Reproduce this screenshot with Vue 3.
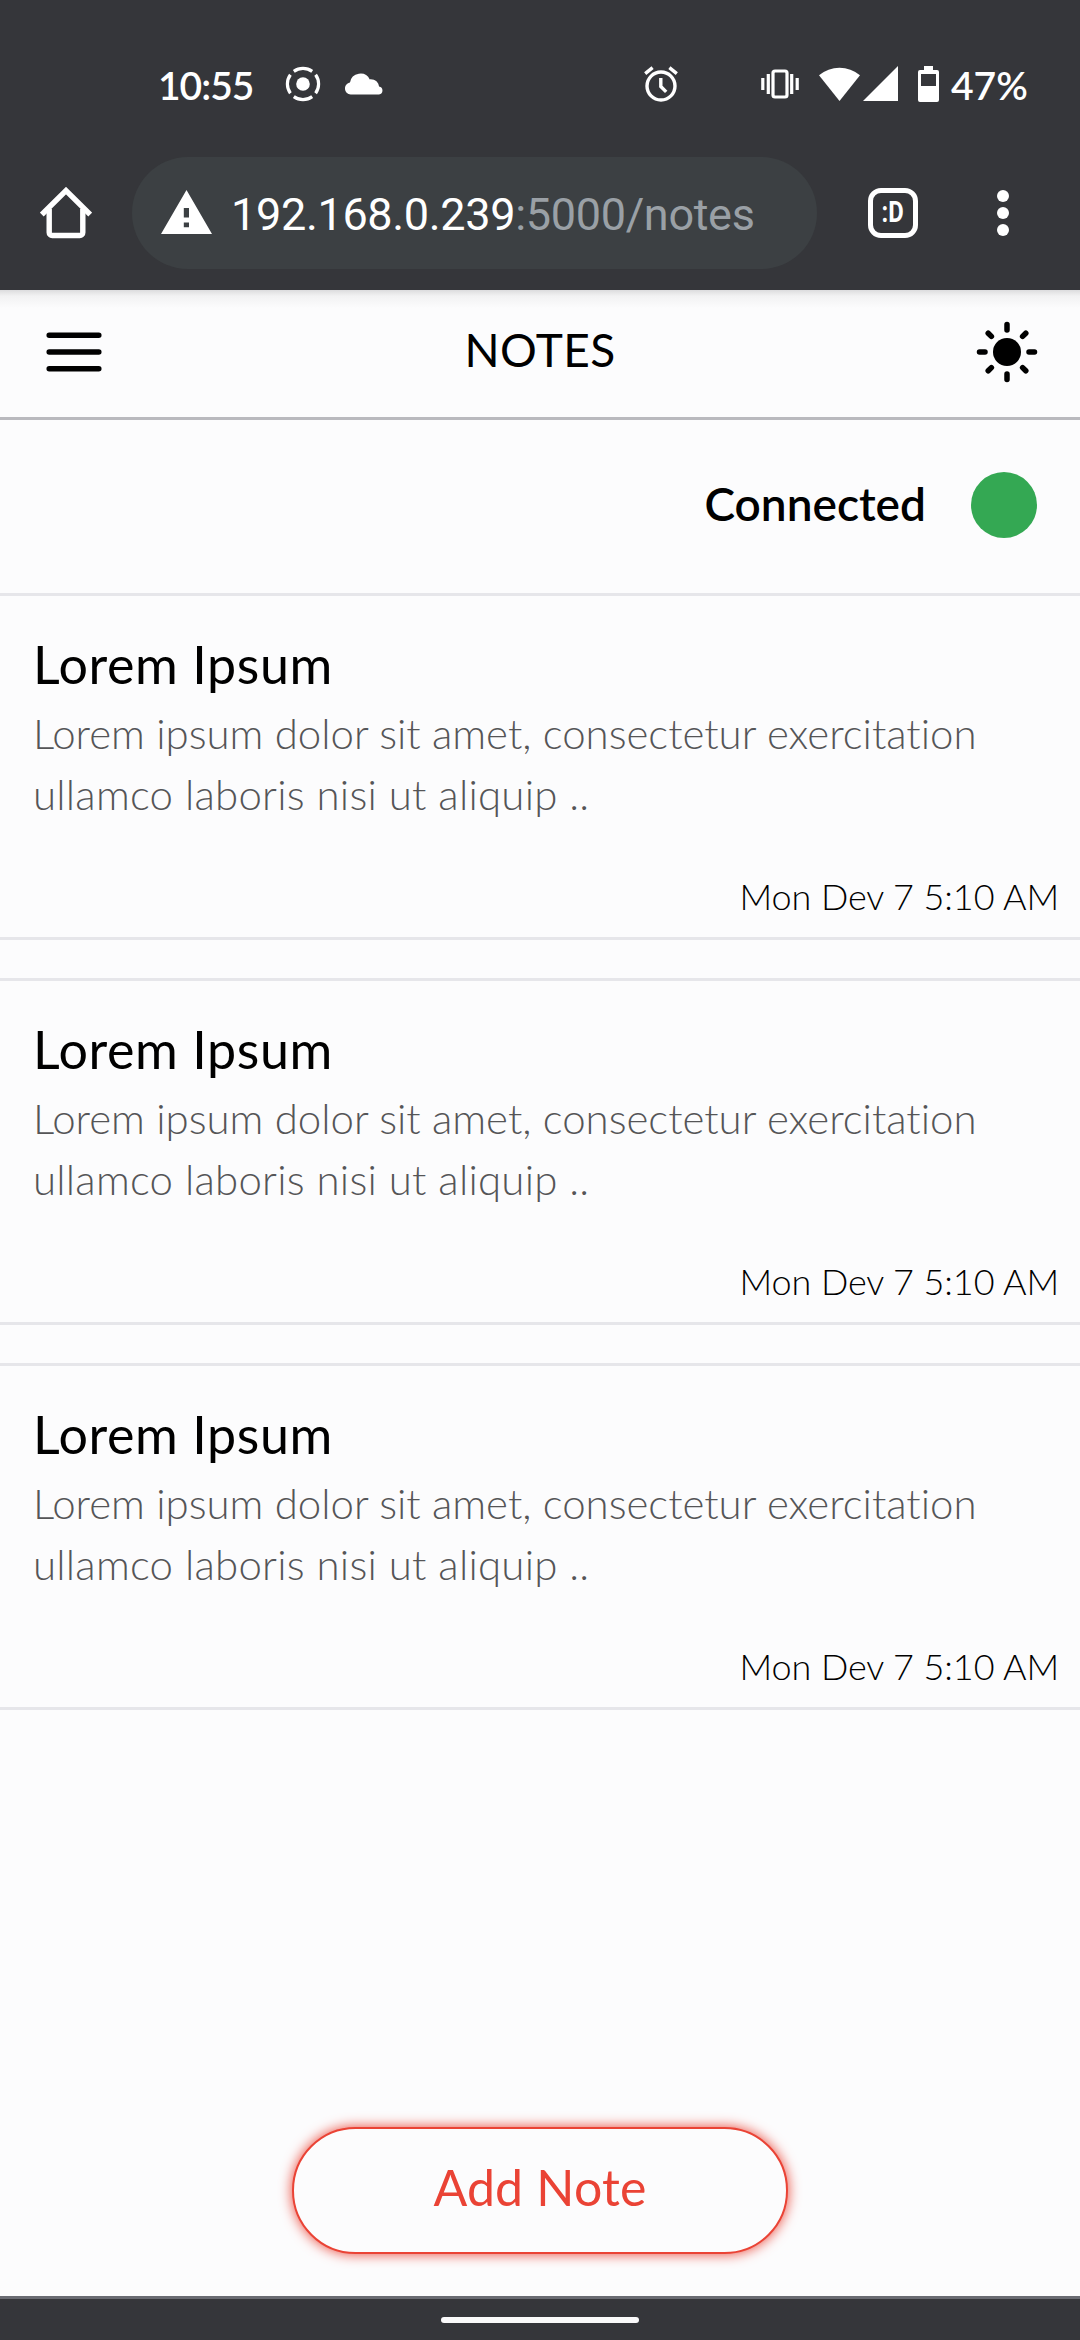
<script setup>
const notes = [1, 2, 3].map((id) => ({
  id,
  title: 'Lorem Ipsum',
  first: 'Lorem ipsum dolor sit amet, consectetur exercitation',
  second: 'ullamco laboris nisi ut aliquip ..',
  date: 'Mon Dev 7 5:10 AM',
}))
</script>

<template>
  <div class="screen">
    <header class="chrome">
      <div class="status">
        <span class="clock">10:55</span>
        <svg class="cast" width="36" height="36" viewBox="-18 -18 36 36" fill="none" stroke="#fff" stroke-width="3.2">
          <circle r="6.8" fill="#fff" stroke="none" />
          <path d="M-9.2-12.6A15.6 15.6 0 0 1 9.2-12.6M12.6-9.2A15.6 15.6 0 0 1 12.6 9.2M9.2 12.6A15.6 15.6 0 0 1-9.2 12.6M-12.6 9.2A15.6 15.6 0 0 1-12.6-9.2" />
        </svg>
        <svg class="cloud" width="38" height="22" viewBox="0 0 38 22" fill="#fff">
          <path d="M6 21.5A5.7 5.7 0 0 1 0 15.4C0 12 2.4 9.8 5 9.4A10.5 10.5 0 0 1 24.8 6.4C30 6 33.6 9.4 34 13.4A4.1 4.1 0 0 1 34 21.5Z" />
        </svg>
        <span class="grow"></span>
        <svg class="alarm" width="34" height="36" viewBox="0 0 34 36" fill="none" stroke="#fff" stroke-width="3.4">
          <circle cx="17" cy="20" r="14" />
          <path d="M16.8 12v8.5l5.4 5.4M1.2 7.6L8.6 1.6M32.8 7.6L25.4 1.6" />
        </svg>
        <svg class="vibrate" width="38" height="30" viewBox="0 0 38 30" fill="none" stroke="#fff" stroke-width="3.2">
          <rect x="12" y="2" width="14" height="26" rx="2" />
          <path d="M7.3 5v20M1.8 9v12M30.7 5v20M36.2 9v12" />
        </svg>
        <svg class="wifi" width="41" height="35" viewBox="0 0 41 35" fill="#fff"><path d="M20.5 35L0 9.2A32 32 0 0 1 41 9.2Z" /></svg>
        <svg class="signal" width="35" height="35" viewBox="0 0 35 35" fill="#fff"><path d="M35 0V35H0Z" /></svg>
        <svg class="battery" width="21" height="36" viewBox="0 0 21 36" fill="#fff" fill-rule="evenodd">
          <path d="M6 0h9v4h4a2 2 0 0 1 2 2v28a2 2 0 0 1-2 2H2a2 2 0 0 1-2-2V6a2 2 0 0 1 2-2h4zM3 8v12h15V8z" />
        </svg>
        <span class="percent">47%</span>
      </div>

      <div class="toolbar">
        <svg class="home" width="52" height="52" viewBox="0 0 52 52" fill="none" stroke="#fff" stroke-width="5.4" stroke-linejoin="round">
          <path d="M1.8 27.5L26 3.6L50.2 27.5" stroke-linejoin="miter" />
          <path d="M9.2 22V45.5a3 3 0 0 0 3 3H39.8a3 3 0 0 0 3-3V22" />
        </svg>
        <div class="omnibox">
          <svg width="51" height="44" viewBox="0 0 51 44" fill="#fff" fill-rule="evenodd">
            <path d="M25.5 0L51 44H0ZM22.8 18v9.5h5.2V18zM22.8 32.5v4.8h5.2v-4.8z" />
          </svg>
          <span class="url">192.168.0.239<span class="path">:5000/notes</span></span>
        </div>
        <div class="tabs"><span>:D</span></div>
        <svg class="more" width="12" height="46" viewBox="0 0 12 46" fill="#fff">
          <circle cx="6" cy="6" r="6" /><circle cx="6" cy="23" r="6" /><circle cx="6" cy="40" r="6" />
        </svg>
      </div>
    </header>

    <nav class="appbar">
      <svg width="56" height="40" viewBox="0 0 56 40" stroke="#000" stroke-width="5.5" stroke-linecap="round">
        <path d="M3.2 3.3H52.8M3.2 20H52.8M3.2 36.7H52.8" />
      </svg>
      <h1>NOTES</h1>
      <svg width="62" height="62" viewBox="-31 -31 62 62" stroke="#000" stroke-width="5.5" stroke-linecap="round">
        <circle r="14" stroke="none" />
        <path d="M0-27.5V-22M0 27.5V22M-27.5 0H-22M27.5 0H22M-18.8-18.8L-15.6-15.6M18.8-18.8L15.6-15.6M-18.8 18.8L-15.6 15.6M18.8 18.8L15.6 15.6" />
      </svg>
    </nav>

    <div class="connection">
      <span class="state">Connected</span>
      <i class="dot"></i>
    </div>

    <main class="notes">
      <article v-for="note in notes" :key="note.id" class="note">
        <h2>{{ note.title }}</h2>
        <p class="body"><span class="first">{{ note.first }}</span><br /><span class="second">{{ note.second }}</span></p>
        <time>{{ note.date }}</time>
      </article>
    </main>

    <div class="actions">
      <button class="add">Add Note</button>
    </div>

    <footer class="navbar"><i class="handle"></i></footer>
  </div>
</template>

<style>
body {
  margin: 0;
}
</style>

<style scoped>
* {
  box-sizing: border-box;
}

.screen {
  display: flex;
  flex-direction: column;
  width: 1080px;
  height: 2340px;
  background: #fcfcfd;
  color: #000;
  font-family: Lato, "Noto Sans", sans-serif;
  font-variant-ligatures: none;
}

svg {
  display: block;
  flex: none;
}

.chrome {
  flex: none;
  height: 290px;
  background: #35363a;
  color: #fff;
}

.status {
  display: flex;
  align-items: center;
  height: 167px;
  padding: 0 53px 0 158px;
}

.clock,
.percent {
  font-size: 39px;
  font-weight: 600;
  line-height: 40px;
  margin-top: 2px;
}

.clock {
  width: 97px;
  letter-spacing: -1px;
}

.cast {
  margin-left: 30px;
}

.cloud {
  margin-left: 24px;
}

.grow {
  flex: 1;
}

.vibrate {
  margin-left: 83px;
}

.wifi {
  margin-left: 20px;
}

.signal {
  margin-left: 3px;
}

.battery {
  margin-left: 20px;
}

.percent {
  width: 76px;
  margin-left: 12px;
}

.toolbar {
  display: flex;
  align-items: center;
  height: 92px;
  padding-left: 40px;
}

.omnibox {
  display: flex;
  align-items: center;
  width: 685px;
  height: 112px;
  margin-left: 40px;
  padding: 0 0 2px 29px;
  border-radius: 56px;
  background: #3c4043;
}

.url {
  margin-left: 19px;
  font: 400 45px/56px Roboto, sans-serif;
  letter-spacing: -0.33px;
  white-space: nowrap;
  padding-top: 5px;
}

.path {
  color: #9aa0a6;
}

.tabs {
  display: flex;
  justify-content: center;
  width: 50px;
  height: 50px;
  margin-left: 51px;
  border: 5.5px solid #fff;
  border-radius: 13px;
  font: 700 29px/38px Roboto, sans-serif;
}

.tabs span {
  transform: scaleX(0.82);
}

.more {
  margin-left: 79px;
}

.appbar {
  display: flex;
  flex: none;
  align-items: center;
  justify-content: space-between;
  height: 130px;
  padding: 0 42px 4px 46px;
  border-bottom: 3px solid #b9b9be;
  background: linear-gradient(#dcdcde, #f2f2f3 6px, #fcfcfd 18px);
}

h1,
h2,
p {
  margin: 0;
  font-weight: 400;
}

h1 {
  padding: 0 0 3px 2px;
  font-size: 46px;
  line-height: 56px;
  letter-spacing: 0.4px;
}

.connection {
  display: flex;
  flex: none;
  align-items: center;
  justify-content: flex-end;
  height: 173px;
  padding: 0 43px 4px 0;
  font-size: 46px;
  font-weight: 600;
}

.state {
  padding-bottom: 2px;
}

.dot {
  width: 66px;
  height: 66px;
  margin-left: 45px;
  border-radius: 50%;
  background: #34a853;
}

.notes {
  display: flex;
  flex: none;
  flex-direction: column;
  gap: 38px;
}

.note {
  display: flex;
  flex-direction: column;
  height: 347px;
  padding: 32px 21px 0 33px;
  border: solid #e6e6ea;
  border-width: 3px 0;
}

h2 {
  font-size: 52px;
  line-height: 72px;
  letter-spacing: 0.6px;
  white-space: nowrap;
}

.body {
  margin-top: 3px;
  font-size: 42px;
  font-weight: 300;
  line-height: 61px;
  color: #555557;
  white-space: nowrap;
}

.first {
  letter-spacing: -0.03px;
}

.second {
  letter-spacing: 0.24px;
}

time {
  align-self: flex-end;
  margin-top: 45px;
  font-size: 36px;
  font-weight: 300;
  line-height: 52px;
  letter-spacing: -0.1px;
  white-space: nowrap;
}

.actions {
  display: flex;
  flex: 1;
  align-items: flex-end;
  justify-content: center;
  padding-bottom: 42px;
}

.add {
  width: 496px;
  height: 127px;
  padding: 0 0 7px;
  border: 2.6px solid #ea4335;
  border-radius: 64px;
  background: #fcfcfd;
  box-shadow: 0 0 13px #ea4335;
  color: #ea4335;
  font: 400 50px/60px Lato, sans-serif;
  letter-spacing: 0.2px;
}

.navbar {
  display: flex;
  flex: none;
  justify-content: center;
  height: 44px;
  padding-top: 18px;
  border-top: 3px solid #6a6b72;
  background: #35363a;
}

.handle {
  width: 198px;
  height: 6px;
  border-radius: 3px;
  background: #fafafa;
}
</style>
